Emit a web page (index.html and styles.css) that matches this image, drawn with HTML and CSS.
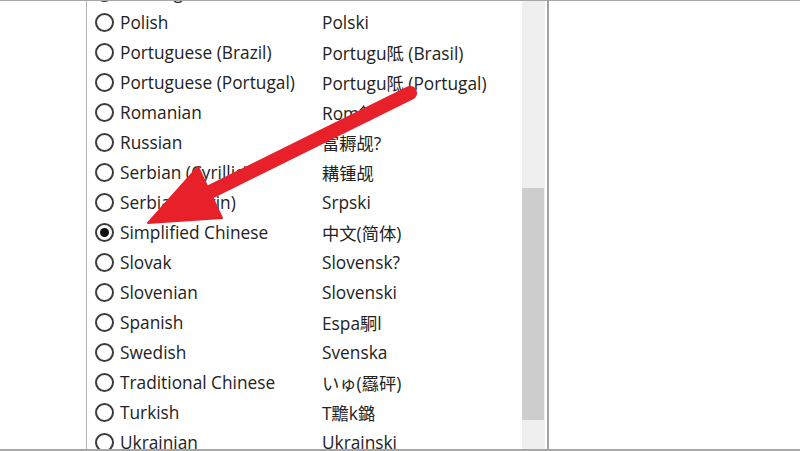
FILE: index.html
```html
<!DOCTYPE html>
<html lang="en">
<head>
<meta charset="utf-8">
<title>Language list</title>
<link rel="stylesheet" href="styles.css">
</head>
<body>
<div class="screen">
  <div class="panel">
    <div class="list">
      <div class="rows">
        <div class="row"><span class="radio"></span><span class="name">Norwegian</span><span class="native">Norsk</span></div>
        <div class="row"><span class="radio"></span><span class="name">Polish</span><span class="native">Polski</span></div>
        <div class="row"><span class="radio"></span><span class="name">Portuguese (Brazil)</span><span class="native">Portugu阺 (Brasil)</span></div>
        <div class="row"><span class="radio"></span><span class="name">Portuguese (Portugal)</span><span class="native">Portugu阺 (Portugal)</span></div>
        <div class="row"><span class="radio"></span><span class="name">Romanian</span><span class="native">Rom鈔</span></div>
        <div class="row"><span class="radio"></span><span class="name">Russian</span><span class="native">富耨觇?</span></div>
        <div class="row"><span class="radio"></span><span class="name">Serbian (Cyrillic)</span><span class="native">耩锺觇</span></div>
        <div class="row"><span class="radio"></span><span class="name">Serbian (Latin)</span><span class="native">Srpski</span></div>
        <div class="row"><span class="radio checked"></span><span class="name">Simplified Chinese</span><span class="native">中文(简体)</span></div>
        <div class="row"><span class="radio"></span><span class="name">Slovak</span><span class="native">Slovensk?</span></div>
        <div class="row"><span class="radio"></span><span class="name">Slovenian</span><span class="native">Slovenski</span></div>
        <div class="row"><span class="radio"></span><span class="name">Spanish</span><span class="native">Espa駉l</span></div>
        <div class="row"><span class="radio"></span><span class="name">Swedish</span><span class="native">Svenska</span></div>
        <div class="row"><span class="radio"></span><span class="name">Traditional Chinese</span><span class="native">いゅ(羉砰)</span></div>
        <div class="row"><span class="radio"></span><span class="name">Turkish</span><span class="native">T黵k鏴</span></div>
        <div class="row"><span class="radio"></span><span class="name">Ukrainian</span><span class="native">Ukrainski</span></div>
      </div>
    </div>
    <div class="scrollbar"><div class="thumb"></div></div>
  </div>
  <svg class="arrow" width="800" height="451" viewBox="0 0 800 451" aria-hidden="true">
    <line x1="208" y1="192" x2="410" y2="92" stroke="#e8202a" stroke-width="14" stroke-linecap="round"/>
    <polygon points="148,222 198,166 222,217" fill="#e8202a" stroke="#e8202a" stroke-width="2" stroke-linejoin="round"/>
  </svg>
</div>
</body>
</html>
```

FILE: styles.css
```css
html, body {
  margin: 0;
  padding: 0;
  background: #ffffff;
}

body {
  font-family: "Open Sans", "Noto Sans", "Noto Sans CJK SC", sans-serif;
  color: #222222;
}

.screen {
  position: relative;
  width: 800px;
  height: 451px;
  box-sizing: border-box;
  border-top: 1px solid #a6a6a6;
  border-bottom: 2px solid #a6a6a6;
  overflow: hidden;
  background: #ffffff;
}

.panel {
  display: flex;
  margin-left: 86px;
  width: 463px;
  height: 100%;
  box-sizing: border-box;
  border-left: 1px solid #b4b4b4;
  border-right: 2px solid #a2a2a2;
}

.list {
  width: 435px;
  height: 100%;
  overflow: hidden;
}

.rows {
  margin-top: -24px;
}

.row {
  display: flex;
  align-items: center;
  height: 30px;
  padding-left: 8px;
  font-size: 17.3px;
  white-space: nowrap;
}

.radio {
  flex: none;
  width: 19px;
  height: 19px;
  box-sizing: border-box;
  border: 2px solid #3c3c3c;
  border-radius: 50%;
  display: flex;
  align-items: center;
  justify-content: center;
}

.radio.checked::after {
  content: "";
  width: 9px;
  height: 9px;
  border-radius: 50%;
  background: #111111;
}

.name {
  width: 202px;
  margin-left: 6px;
}

.native {
  font-family: "Open Sans", "Noto Sans CJK SC", sans-serif;
}

.scrollbar {
  width: 23px;
  height: 100%;
  margin-right: 2px;
  padding-top: 187px;
  box-sizing: border-box;
  background: #efefef;
}

.thumb {
  height: 232px;
  margin-right: 1px;
  background: #cdcdcd;
}

.arrow {
  position: absolute;
  top: 0;
  left: 0;
  pointer-events: none;
}
```
